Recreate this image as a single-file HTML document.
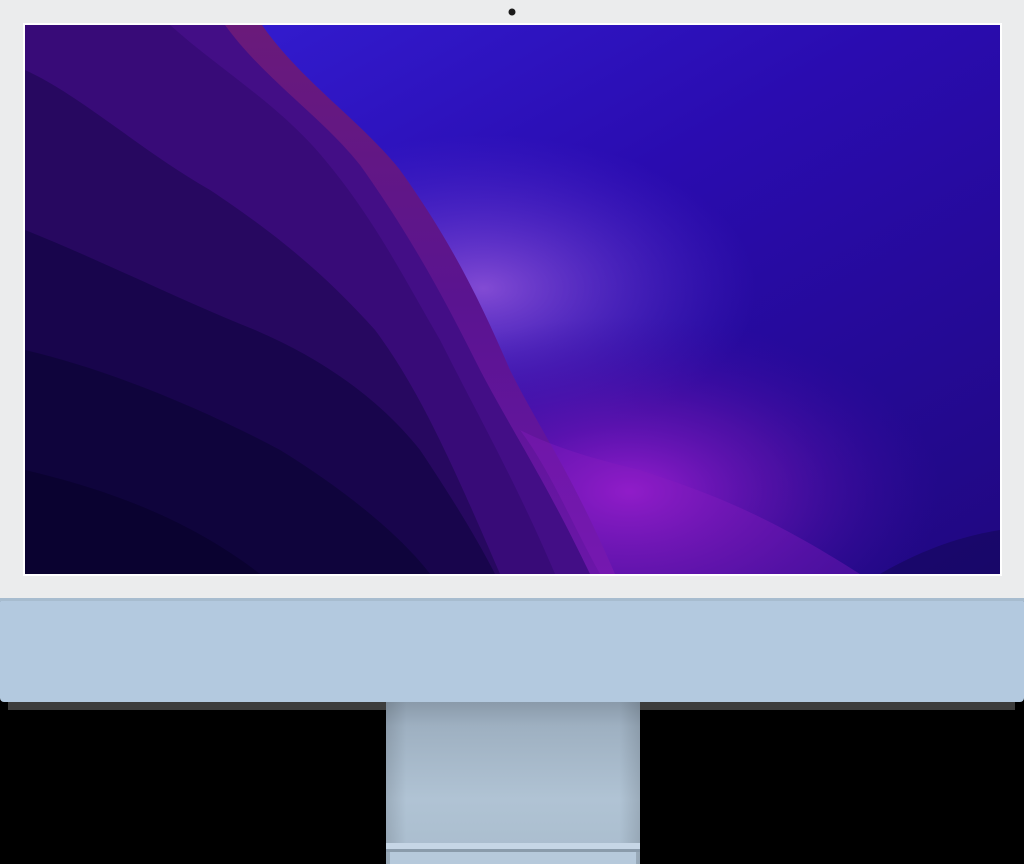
<!DOCTYPE html>
<html><head><style>
html,body{margin:0;padding:0;background:#000;width:1024px;height:864px;overflow:hidden}
</style></head><body>
<svg width="1024" height="864" viewBox="0 0 1024 864" xmlns="http://www.w3.org/2000/svg" style="display:block">
<defs>
<linearGradient id="stand" x1="0" y1="0" x2="0" y2="1">
<stop offset="0" stop-color="#8a9aaa"/><stop offset="0.15" stop-color="#9eb0c1"/><stop offset="0.6" stop-color="#b0c3d4"/><stop offset="1" stop-color="#a9bccd"/>
</linearGradient>
<linearGradient id="standH" x1="0" y1="0" x2="1" y2="0">
<stop offset="0" stop-color="#000" stop-opacity="0.12"/><stop offset="0.08" stop-color="#000" stop-opacity="0"/><stop offset="0.92" stop-color="#000" stop-opacity="0"/><stop offset="1" stop-color="#000" stop-opacity="0.12"/>
</linearGradient>
<linearGradient id="sky" x1="0" y1="0" x2="1" y2="1">
<stop offset="0" stop-color="#3520d8"/><stop offset="0.45" stop-color="#2a0cb0"/><stop offset="1" stop-color="#200880"/>
</linearGradient>
<radialGradient id="glow" cx="0.62" cy="0.85" r="0.32">
<stop offset="0" stop-color="#9a1ed0" stop-opacity="0.95"/><stop offset="0.5" stop-color="#6a14b0" stop-opacity="0.55"/><stop offset="1" stop-color="#3a0aa0" stop-opacity="0"/>
</radialGradient>
<radialGradient id="light" cx="0.47" cy="0.48" r="0.28">
<stop offset="0" stop-color="#a060e0" stop-opacity="0.75"/><stop offset="1" stop-color="#5a30d0" stop-opacity="0"/>
</radialGradient>
<linearGradient id="ridge" x1="0" y1="0" x2="0" y2="1">
<stop offset="0" stop-color="#6a1a7a"/><stop offset="0.5" stop-color="#5a1490"/><stop offset="1" stop-color="#6a16a8"/>
</linearGradient>
<clipPath id="scr"><rect x="25" y="25" width="975" height="549"/></clipPath>
</defs>
<rect x="0" y="0" width="1024" height="600" fill="#ebeced"/>
<rect x="0" y="598" width="1024" height="104" rx="4" fill="#b3c9df"/>
<rect x="0" y="598" width="1024" height="3" fill="#a7bccf"/>
<rect x="8" y="702" width="378" height="8" fill="#3d3d3d"/>
<rect x="640" y="702" width="375" height="8" fill="#3d3d3d"/>
<rect x="386" y="702" width="254" height="162" fill="url(#stand)"/>
<rect x="386" y="702" width="254" height="162" fill="url(#standH)"/>
<rect x="386" y="843" width="254" height="6" fill="#c6d6e6"/>
<rect x="386" y="849" width="254" height="3" fill="#8a9bab"/>
<rect x="390" y="852" width="246" height="12" fill="#b6c9db"/>
<circle cx="512" cy="12" r="3.5" fill="#1a1a1a"/>
<rect x="23" y="23" width="979" height="553" fill="#fff"/>
<g clip-path="url(#scr)">
<rect x="25" y="25" width="975" height="549" fill="url(#sky)"/>
<rect x="25" y="25" width="975" height="549" fill="url(#light)"/>
<rect x="25" y="25" width="975" height="549" fill="url(#glow)"/>
<path d="M880 574 C930 545 970 535 1000 530 L1000 574 Z" fill="#14065a" opacity="0.6"/>
<path d="M25 25 L262 25 C300 80 360 120 400 170 C450 240 480 300 510 370 C540 430 570 470 615 574 L25 574 Z" fill="url(#ridge)"/>
<path d="M25 25 L225 25 C265 80 320 115 360 165 C410 235 445 300 475 360 C505 420 540 470 590 574 L25 574 Z" fill="#430e86"/>
<path d="M25 25 L170 25 C220 70 280 105 325 160 C375 220 405 280 440 340 C475 410 515 480 555 574 L25 574 Z" fill="#380b78"/>
<path d="M25 70 C80 95 140 150 210 190 C285 240 330 280 375 330 C420 390 455 470 500 574 L25 574 Z" fill="#270860"/>
<path d="M25 230 C100 260 180 300 255 330 C325 360 380 400 420 450 C450 495 475 535 495 574 L25 574 Z" fill="#18054c"/>
<path d="M25 350 C110 370 205 410 280 450 C345 490 400 535 430 574 L25 574 Z" fill="#0f043c"/>
<path d="M25 470 C110 490 190 520 260 574 L25 574 Z" fill="#0a0230"/>
<path d="M520 430 C560 450 600 460 640 470 C700 490 760 510 860 574 L600 574 C570 520 550 470 520 430 Z" fill="#8a1cc0" opacity="0.35"/>
</g>
</svg>
</body></html>
